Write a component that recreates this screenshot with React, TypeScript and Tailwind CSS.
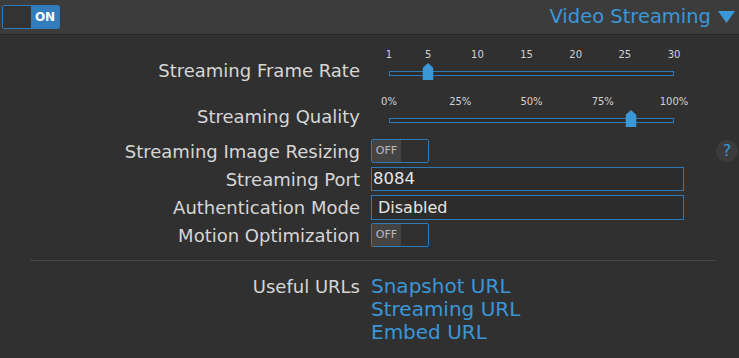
import type { ReactNode } from 'react'

const FONT = 'font-["DejaVu_Sans",sans-serif]'

const FRAME_TICKS = [1, 5, 10, 15, 20, 25, 30]
const QUALITY_TICKS = [0, 25, 50, 75, 100]

function Thumb() {
  return (
    <svg width="11" height="17" viewBox="0 0 11 17" className="block">
      <polygon points="0,5 5.5,0 11,5 11,17 0,17" fill="#3a97d8" />
    </svg>
  )
}

function Slider({ ticks, min, max, value, suffix = '' }: { ticks: number[]; min: number; max: number; value: number; suffix?: string }) {
  const pct = (v: number) => ((v - min) / (max - min)) * 100
  return (
    <div className="w-[285px] ml-[18px]">
      <div className="relative h-[16px]">
        {ticks.map((t) => (
          <span
            key={t}
            className="absolute top-0 -translate-x-1/2 text-[10px] leading-[16px] text-[#d2d2d2]"
            style={{ left: `${pct(t)}%` }}
          >
            {t}{suffix}
          </span>
        ))}
      </div>
      <div className="relative h-[24px]">
        <div className="absolute left-0 right-0 top-[8px] h-[5px] border border-[#2f7ab8] bg-[#2c2c2c]" />
        <div className="absolute top-0 -translate-x-1/2" style={{ left: `${pct(value)}%` }}>
          <Thumb />
        </div>
      </div>
    </div>
  )
}

function Toggle({ on = false }: { on?: boolean }) {
  return (
    <div className="flex w-[58px] h-[24px] border border-[#2f7ab8] rounded-[2px] overflow-hidden">
      {on ? (
        <>
          <div className="w-[28px] bg-[#333333]" />
          <div className="flex-1 bg-[#327dbb] text-white text-[12px] font-bold flex items-center justify-center">ON</div>
        </>
      ) : (
        <>
          <div className="w-[29px] bg-[#444444] text-[#bdbdbd] text-[11px] flex items-center justify-center">OFF</div>
          <div className="flex-1 bg-[#303030]" />
        </>
      )}
    </div>
  )
}

function Row({ label, children, extra }: { label: string; children: ReactNode; extra?: ReactNode }) {
  return (
    <div className="flex items-center h-[28px]">
      <div className="w-[360px] text-right text-[18px] text-[#d6d6d6] whitespace-nowrap">{label}</div>
      <div className="ml-[11px] flex items-center">{children}</div>
      {extra}
    </div>
  )
}

export default function App() {
  return (
    <div className={`w-[739px] h-[358px] bg-[#303030] overflow-hidden ${FONT}`}>
      {/* Header */}
      <div className="flex items-center justify-between h-[35px] pl-[2px] pr-[4px] bg-[#3c3c3c] border-b border-[#282828]">
        <Toggle on />
        <div className="flex items-center gap-[7px] text-[#3a97d8]">
          <span className="text-[19.5px]">Video Streaming</span>
          <svg width="17" height="12" viewBox="0 0 17 12">
            <polygon points="0,0 17,0 8.5,12" fill="#3a97d8" />
          </svg>
        </div>
      </div>

      {/* Sliders */}
      <div className="flex items-start mt-[12px] h-[47px]">
        <div className="w-[360px] text-right text-[18px] text-[#d6d6d6] mt-[10px]">Streaming Frame Rate</div>
        <div className="ml-[11px]">
          <Slider ticks={FRAME_TICKS} min={1} max={30} value={5} />
        </div>
      </div>
      <div className="flex items-start h-[43px]">
        <div className="w-[360px] text-right text-[18px] text-[#d6d6d6] mt-[9px]">Streaming Quality</div>
        <div className="ml-[11px]">
          <Slider ticks={QUALITY_TICKS} min={0} max={100} value={85} suffix="%" />
        </div>
      </div>

      {/* Options */}
      <Row
        label="Streaming Image Resizing"
        extra={
          <div className="ml-auto mr-[1px] w-[22px] h-[22px] rounded-full bg-[#3b3b3b] flex items-center justify-center text-[#3a97d8] text-[16px]">?</div>
        }
      >
        <Toggle />
      </Row>
      <Row label="Streaming Port">
        <div className="w-[313px] h-[24px] border border-[#2f7ab8] bg-[#2c2c2c] text-[16.5px] text-[#e6e6e6] leading-[22px] pl-[1px]">8084</div>
      </Row>
      <Row label="Authentication Mode">
        <div className="w-[313px] h-[25px] border border-[#2f7ab8] bg-[#2c2c2c] text-[16px] text-[#e6e6e6] leading-[23px] pl-[6px]">Disabled</div>
      </Row>
      <Row label="Motion Optimization">
        <Toggle />
      </Row>

      {/* Separator */}
      <div className="ml-[30px] mr-[24px] mt-[11px] h-px bg-[#464646]" />

      {/* Useful URLs */}
      <div className="flex items-start mt-[14px]">
        <div className="w-[360px] text-right text-[18px] text-[#d6d6d6] leading-[23px]">Useful URLs</div>
        <div className="ml-[11px] flex flex-col text-[20px] leading-[23px] text-[#3a97d8]">
          <a>Snapshot URL</a>
          <a>Streaming URL</a>
          <a>Embed URL</a>
        </div>
      </div>
    </div>
  )
}
